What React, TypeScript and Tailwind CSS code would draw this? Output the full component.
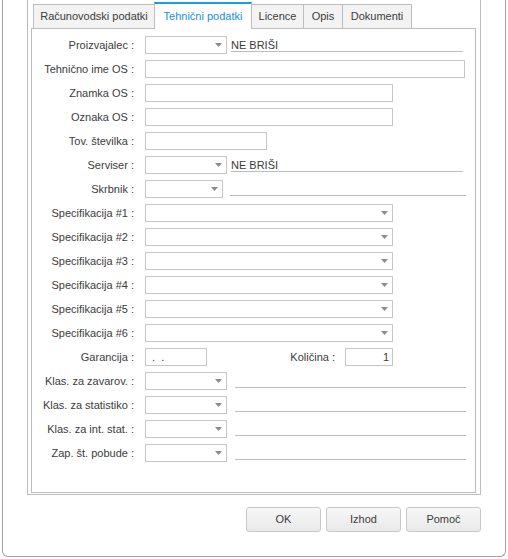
import type { ReactNode } from "react";

// Tehnični podatki tab of the asset dialog: labelled fields, combos and the button row.

function Arrow() {
  return (
    <svg width="7" height="4" viewBox="0 0 7 4" className="shrink-0">
      <path d="M0 0h7L3.5 4z" fill="#8a8a8a" />
    </svg>
  );
}

function Combo({ w }: { w: string }) {
  return (
    <div className={`flex h-[18px] shrink-0 items-center justify-end border border-[#c6c6c6] bg-white pr-[4px] ${w}`}>
      <Arrow />
    </div>
  );
}

function Field({ w, children, right }: { w: string; children?: ReactNode; right?: boolean }) {
  return (
    <div
      className={`flex h-[18px] shrink-0 items-center border border-[#c6c6c6] bg-white px-[6px] whitespace-pre ${
        right ? "justify-end pr-[3px]" : ""
      } ${w}`}
    >
      {children}
    </div>
  );
}

function Row({ label, children }: { label: string; children: ReactNode }) {
  return (
    <div className="flex h-[18px] items-center">
      <div className="w-[102px] shrink-0 text-right whitespace-nowrap">{label}</div>
      <div className="ml-[11px] flex h-[18px] items-start">{children}</div>
    </div>
  );
}

function Underline({ ml, w, children }: { ml: string; w: string; children?: ReactNode }) {
  return (
    <div className={`flex h-[16px] items-end border-b border-[#bdbdbd] leading-[12px] ${ml} ${w}`}>{children}</div>
  );
}

const tabs = [
  { name: "Računovodski podatki", w: "w-[122px]" },
  { name: "Tehnični podatki", w: "w-[98px]", active: true },
  { name: "Licence", w: "w-[53px]" },
  { name: "Opis", w: "w-[40px]" },
  { name: "Dokumenti", w: "w-[70px]" },
];

const specs = [1, 2, 3, 4, 5, 6];

const klas = ["Klas. za zavarov. :", "Klas. za statistiko :", "Klas. za int. stat. :", "Zap. št. pobude :"];

export default function App() {
  return (
    <div className="h-[559px] w-[508px] overflow-hidden bg-white text-[11px] leading-none text-[#3c3c3c] [font-family:'Liberation_Sans',Arial,sans-serif]">
      <div className="ml-[2px] h-[557px] w-[504px] rounded-b-[6px] border border-t-0 border-[#a3a3a3]">
        <div className="ml-[24px] h-[495px] w-[454px] border border-t-0 border-[#bdbdbd]">
          <div className="flex h-[28px] items-end pl-[5px]">
            {tabs.map((t, i) =>
              t.active ? (
                <div
                  key={t.name}
                  className={`relative z-10 -mb-px -ml-px flex h-[27px] items-center justify-center border-x border-t-2 border-x-[#bdbdbd] border-t-[#1a9ee0] bg-white pb-[1px] text-[#1a8fd6] ${t.w}`}
                >
                  {t.name}
                </div>
              ) : (
                <div
                  key={t.name}
                  className={`flex h-[24px] items-center justify-center border-x border-t border-[#bdbdbd] bg-[#f3f3f3] ${
                    i > 0 ? "-ml-px" : ""
                  } ${t.w}`}
                >
                  {t.name}
                </div>
              )
            )}
          </div>

          <div className="ml-[3px] flex h-[465px] w-[445px] flex-col gap-[6px] border border-[#bdbdbd] pt-[7px]">
            <Row label="Proizvajalec :">
              <Combo w="w-[82px]" />
              <Underline ml="ml-[4px]" w="w-[232px]">
                NE BRIŠI
              </Underline>
            </Row>
            <Row label="Tehnično ime OS :">
              <Field w="w-[320px]" />
            </Row>
            <Row label="Znamka OS :">
              <Field w="w-[248px]" />
            </Row>
            <Row label="Oznaka OS :">
              <Field w="w-[248px]" />
            </Row>
            <Row label="Tov. številka :">
              <Field w="w-[122px]" />
            </Row>
            <Row label="Serviser :">
              <Combo w="w-[82px]" />
              <Underline ml="ml-[4px]" w="w-[232px]">
                NE BRIŠI
              </Underline>
            </Row>
            <Row label="Skrbnik :">
              <Combo w="w-[78px]" />
              <Underline ml="ml-[7px]" w="w-[236px]" />
            </Row>
            {specs.map((n) => (
              <Row key={n} label={`Specifikacija #${n} :`}>
                <Combo w="w-[248px]" />
              </Row>
            ))}
            <Row label="Garancija :">
              <div className="flex w-[248px] items-center justify-between">
                <Field w="w-[62px]">{".  ."}</Field>
                <div className="flex items-center">
                  <span>Količina :</span>
                  <div className="ml-[10px]">
                    <Field w="w-[48px]" right>
                      1
                    </Field>
                  </div>
                </div>
              </div>
            </Row>
            {klas.map((k) => (
              <Row key={k} label={k}>
                <Combo w="w-[82px]" />
                <Underline ml="ml-[8px]" w="w-[231px]" />
              </Row>
            ))}
          </div>
        </div>

        <div className="mt-[12px] ml-[243px] flex gap-[5px]">
          {["OK", "Izhod", "Pomoč"].map((b) => (
            <button
              key={b}
              className="flex h-[25px] w-[75px] items-center justify-center rounded-[3px] border border-[#c8c8c8] bg-gradient-to-b from-[#f7f7f7] to-[#e9e9e9] text-[#3c3c3c]"
            >
              {b}
            </button>
          ))}
        </div>
      </div>
    </div>
  );
}
